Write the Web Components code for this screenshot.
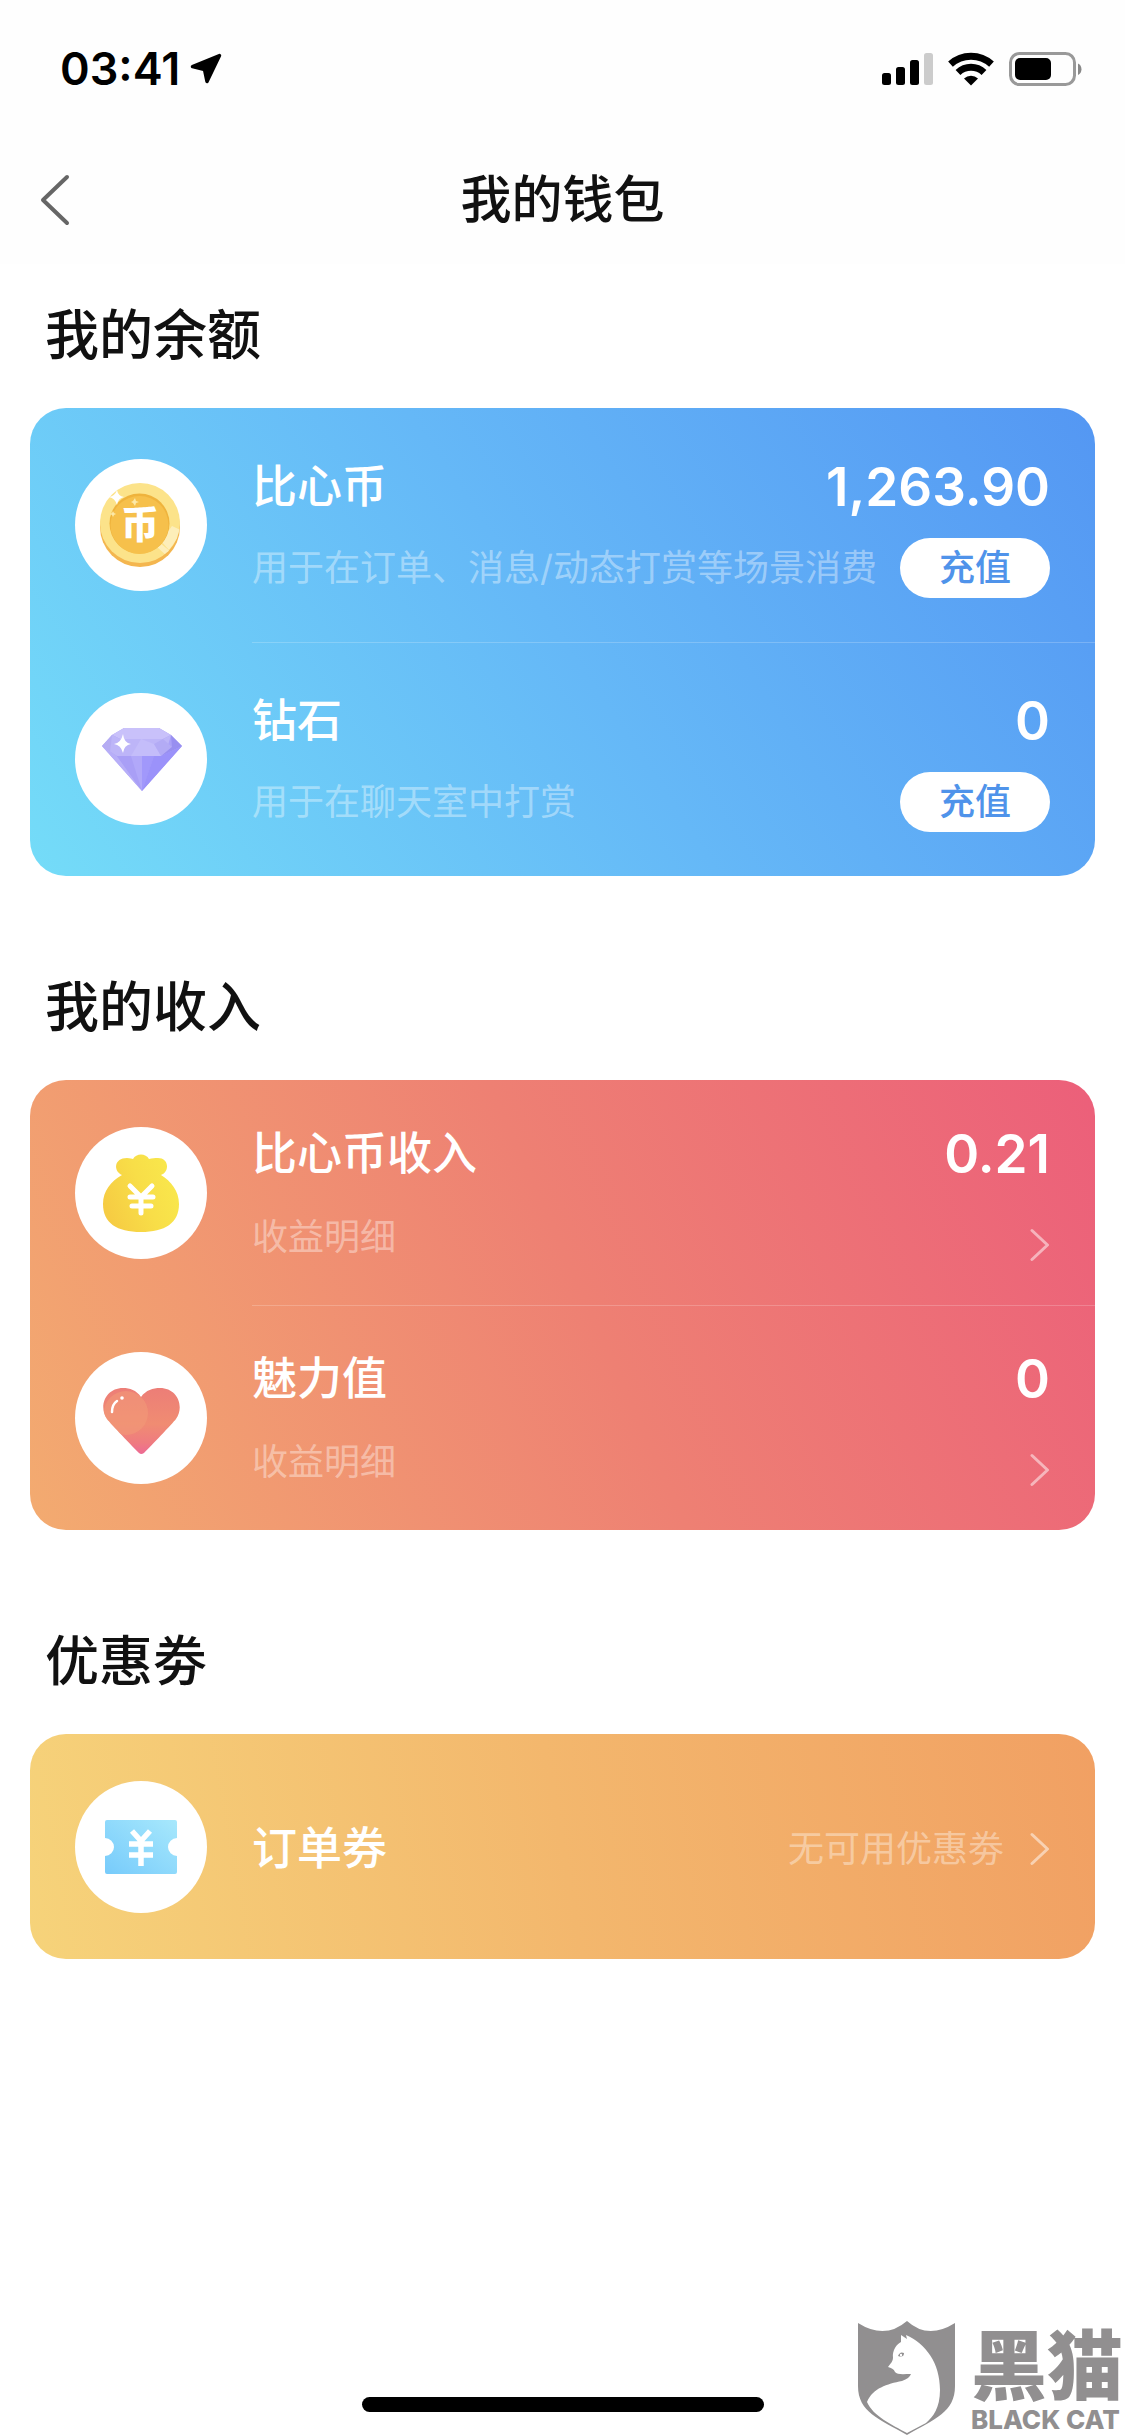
<!DOCTYPE html>
<html lang="zh-CN">
<head>
<meta charset="utf-8">
<meta name="viewport" content="width=device-width, initial-scale=1">
<title>我的钱包</title>
<style>
  body {
    margin: 0;
    background: #fff;
    color: #111;
    font-family: Inter, "Noto Sans CJK SC", sans-serif;
  }
</style>
</head>
<body>
<wallet-app></wallet-app>

<script>
const define = (name, html) => {
  const template = document.createElement('template');
  template.innerHTML = html;
  customElements.define(name, class extends HTMLElement {
    constructor() {
      super();
      this.attachShadow({ mode: 'open' }).append(template.content.cloneNode(true));
    }
    connectedCallback() {
      this.shadowRoot.querySelectorAll('[data-text]').forEach(node => {
        node.textContent = this.getAttribute(node.dataset.text) || '';
      });
    }
  });
};

/* ---------- status bar ---------- */
define('status-bar', `
<style>
  :host { display: flex; align-items: center; justify-content: space-between; height: 132px; padding: 6px 42px 0 60px; box-sizing: border-box; color: #000; }
  .left { display: flex; align-items: center; gap: 10px; }
  time { font-size: 45px; font-weight: 600; line-height: 54px; }
  svg { display: block; }
</style>
<div class="left">
  <time>03:41</time>
  <svg width="32" height="32" viewBox="0 0 32 32" aria-hidden="true"><path d="M29.5 2.5 L2.5 13.5 L14.500 16.500 L17 28.500 Z" fill="#000" stroke="#000" stroke-width="3.500" stroke-linejoin="round"/></svg>
</div>
<svg width="201" height="34" viewBox="0 0 201 34" aria-hidden="true">
  <rect x="0" y="21" width="9" height="12" rx="2.5"/>
  <rect x="14" y="15" width="9" height="18" rx="2.5"/>
  <rect x="28" y="8" width="9" height="25" rx="2.5"/>
  <rect x="42" y="1" width="9" height="32" rx="2.5" fill="#ccc"/>
  <g fill="none" stroke="#000" stroke-width="7">
    <path d="M68.5 12.2 A30.5 30.5 0 0 1 109.500 12.2"/>
    <path d="M76 20.5 A19 19 0 0 1 102 20.5"/>
  </g>
  <path d="M82 26.500 A10.500 10.500 0 0 1 96 26.500 L89 33.500 Z"/>
  <rect x="128.500" y="1.500" width="64" height="31" rx="9" fill="none" stroke="#999" stroke-width="3"/>
  <rect x="133" y="6" width="36" height="22" rx="5"/>
  <path d="M196 11.500 A6.500 6.500 0 0 1 196 23 Z" fill="#888"/>
</svg>`);

/* ---------- navigation bar ---------- */
define('nav-bar', `
<style>
  :host { display: grid; grid-template-columns: 1fr auto 1fr; align-items: center; height: 132px; padding-top: 4px; box-sizing: border-box; }
  button { justify-self: start; border: 0; background: none; padding: 0 40px; cursor: pointer; }
  svg { display: block; }
  h1 { margin: 0; font-size: 51px; font-weight: 500; line-height: 72px; }
</style>
<button type="button" aria-label="返回">
  <svg width="30" height="52" viewBox="0 0 30 52"><path d="M27 3 L3 26 L27 49" fill="none" stroke="#666" stroke-width="4" stroke-linecap="round" stroke-linejoin="round"/></svg>
</button>
<h1><slot></slot></h1>`);

/* ---------- section: heading and coloured card ---------- */
define('wallet-section', `
<style>
  :host { display: block; padding: 0 30px; }
  h2 { display: flex; align-items: center; height: 144px; margin: 0; padding: 0 15px; font-size: 54px; font-weight: 500; line-height: 72px; }
  .card { border-radius: 36px; background: var(--card-fill); color: #fff; overflow: hidden; }
</style>
<h2 data-text="heading"></h2>
<div class="card"><slot></slot></div>`);

/* ---------- one row of a card ---------- */
define('wallet-row', `
<style>
  :host { display: flex; align-items: stretch; gap: 45px; height: 225px; padding-left: 45px; --gap: 23px; }
  :host([tall]) { height: 234px; --gap: 21px; }
  .icon { align-self: center; flex: none; width: 132px; height: 132px; border-radius: 50%; background: #fff; }
  .body { flex: 1; display: flex; flex-direction: column; justify-content: center; gap: var(--gap); padding: 4px 45px 0 0; border-top: 1px solid transparent; min-width: 0; }
  :host([divided]) .body { border-top-color: rgba(255,255,255,.2); }
  .line { display: flex; align-items: center; justify-content: space-between; height: 60px; white-space: nowrap; }
  h3 { margin: 0; font-size: 45px; font-weight: 500; line-height: 60px; }
  .amount { font-size: 53px; font-weight: 600; line-height: 60px; }
  .note { font-size: 36px; line-height: 60px; font-weight: 400; color: rgba(255,255,255,.4); }
  :host([single]) .sub { display: none; }
</style>
<div class="icon"><slot name="icon"></slot></div>
<div class="body">
  <div class="line"><h3 data-text="name"></h3><span class="amount" data-text="amount"></span><slot name="side"></slot></div>
  <div class="line sub"><span class="note" data-text="note"></span><slot></slot></div>
</div>`);

define('recharge-button', `
<style>
  :host { display: block; }
  button { display: block; width: 150px; height: 60px; border: 0; border-radius: 30px; padding: 0; background: #fff; color: #4f93ea; font: 500 36px/60px Inter, "Noto Sans CJK SC", sans-serif; cursor: pointer; }
</style>
<button type="button"><slot></slot></button>`);

define('more-link', `
<style>
  :host { display: block; align-self: flex-end; }
  :host([middle]) { align-self: center; }
  a { display: flex; align-items: center; gap: 26px; color: rgba(255,255,255,.4); text-decoration: none; font-size: 36px; font-weight: 400; line-height: 44px; }
  svg { display: block; }
</style>
<a href="#detail" aria-label="查看明细"><slot></slot>
  <svg width="20" height="44" viewBox="0 0 20 44"><path d="M2 7.500 L17.500 22 L2 36.500" fill="none" stroke="#fff" stroke-opacity=".5" stroke-width="3" stroke-linecap="round" stroke-linejoin="round"/></svg>
</a>`);

/* ---------- round icons ---------- */
define('coin-icon', `
<style>:host, svg { display: block; } text { font: 900 38px "Noto Sans CJK SC", sans-serif; }</style>
<svg width="132" height="132" viewBox="0 0 132 132">
  <circle cx="65" cy="68" r="40" fill="#f4b64f"/>
  <circle cx="65" cy="64" r="40" fill="#fce38a"/>
  <clipPath id="c"><circle cx="65" cy="64" r="40"/></clipPath>
  <g clip-path="url(#c)" fill="#fff" opacity=".4"><path d="M86 82 L97 67 L108 72 L94 91 Z"/><path d="M82 88 L85 84 L96 93 L92 97 Z"/></g>
  <circle cx="64.500" cy="64.500" r="30" fill="#efb33c"/>
  <circle cx="64.500" cy="66" r="29" fill="#f6c04b"/>
  <text x="65" y="79" text-anchor="middle" fill="#fff">币</text>
  <path d="M42 31 Q43 37 49 38 Q43 39 42 46 Q40 39 34 38 Q40 37 42 31 Z" fill="#fff"/>
  <path d="M60 39 L61 42 L64 43 L61 44 L60 47 L58 44 L56 43 L58 42 Z M38 52 L39 54 L41 55 L39 56 L38 58 L37 56 L35 55 L37 54 Z" fill="#fce9a8"/>
</svg>`);

define('diamond-icon', `
<style>:host, svg { display: block; }</style>
<svg width="132" height="132" viewBox="0 0 132 132">
  <path d="M49 35 H84 L96 42 L107 53 L67 98 L27 53 L37 42 Z" fill="#aaa1f7"/>
  <path d="M49 35 H84 L96 42 L88 46 H45 L37 42 Z" fill="#c9c1fa"/>
  <path d="M37 42 L45 46 L35 59 L27 53 Z" fill="#b5acf3"/>
  <path d="M37 42 L45 46 H88 L96 42 L91 59 L86 63 H42 L35 59 Z" fill="#bdb5f8"/>
  <path d="M66 46 L79 51 L86 63 H56 Z" fill="#c4bdfa"/>
  <path d="M79 51 L88 46 L97 54 L86 63 Z" fill="#b3abf5"/>
  <path d="M96 42 L107 53 L86 63 L97 54 Z" fill="#988ff0"/>
  <path d="M27 53 L42 63 L67 98 Z" fill="#b7aef8"/>
  <path d="M42 63 H56 L67 98 Z" fill="#a99ff6"/>
  <path d="M56 63 H67 V98 Z" fill="#b1a8f9"/>
  <path d="M67 63 H79 L67 98 Z" fill="#a198fb"/>
  <path d="M79 63 H86 L107 53 L67 98 Z" fill="#9b92fa"/>
  <path d="M48 41 Q49 50 56 51 Q49 52 48 60 Q46 52 39 51 Q46 50 48 41 Z" fill="#fff"/>
</svg>`);

define('bag-icon', `
<style>:host, svg { display: block; }</style>
<svg width="132" height="132" viewBox="0 0 132 132">
  <defs><linearGradient id="g" x1="1" y1="0.200" x2="0" y2="0.600"><stop offset="0" stop-color="#f9e94d"/><stop offset=".5" stop-color="#f8de48"/><stop offset="1" stop-color="#f6cc43"/></linearGradient></defs>
  <path d="M47 48 C38 44 39 31 52 31 C55 31 57 32 58 32 C61 26 71 26 74 32 C77 31 80 31 83 31 C94 31 95 45 86 48 C96 54 104 64 104 77 C104 96 90 105 66 105 C42 105 28 96 28 77 C28 64 36 54 47 48 Z" fill="url(#g)"/>
  <path d="M55 59 L66 70 L77 59 M55 70 H78 M57 79 H76 M66 70 V86" fill="none" stroke="#fff" stroke-width="5" stroke-linecap="round" stroke-linejoin="round"/>
</svg>`);

define('heart-icon', `
<style>:host, svg { display: block; }</style>
<svg width="132" height="132" viewBox="0 0 132 132">
  <defs>
    <linearGradient id="h" x1="0.500" y1="0" x2="0.500" y2="1"><stop offset="0" stop-color="#ec7b78"/><stop offset=".55" stop-color="#f08c72"/><stop offset=".8" stop-color="#ef7b80"/><stop offset="1" stop-color="#ec649c"/></linearGradient>
    <clipPath id="k"><path d="M66 45 C71 38 78 36 85 36 C102 36 110 54 101 67 C97 72 76 94 69 101 Q66 103 64 101 C57 94 36 72 32 67 C23 54 31 36 48 36 C55 36 61 38 66 45 Z"/></clipPath>
  </defs>
  <g clip-path="url(#k)">
    <rect x="20" y="30" width="94" height="76" fill="url(#h)"/>
    <circle cx="51" cy="61" r="22" fill="#f39a78" opacity=".55"/>
  </g>
  <path d="M37 60 C37 54 39 51 42 49" fill="none" stroke="#fff" stroke-width="2.500" stroke-linecap="round"/>
  <circle cx="47" cy="46" r="1.800" fill="#fff"/>
</svg>`);

define('ticket-icon', `
<style>:host, svg { display: block; }</style>
<svg width="132" height="132" viewBox="0 0 132 132">
  <defs><linearGradient id="t" x1="1" y1="0" x2="0" y2="1"><stop offset="0" stop-color="#a7e8fc"/><stop offset="1" stop-color="#77cbfb"/></linearGradient></defs>
  <path d="M32 39 H100 Q102 39 102 41 V57 A9 9 0 0 0 102 75 V91 Q102 93 100 93 H32 Q30 93 30 91 V75 A9 9 0 0 0 30 57 V41 Q30 39 32 39 Z" fill="url(#t)"/>
  <path d="M57 50 L66 60 L75 50 M54 63 H78 M54 74 H78 M66 60 V85" fill="none" stroke="#fff" stroke-width="5.500"/>
</svg>`);

/* ---------- publisher mark over the bottom corner ---------- */
define('black-cat-mark', `
<style>
  :host { position: absolute; right: 2px; bottom: 0; display: flex; align-items: flex-end; gap: 15px; color: #918f90; }
  svg { display: block; }
  .words { display: flex; flex-direction: column; gap: 6px; padding-bottom: 3px; }
  .cn { font: 900 76px/80px "Noto Sans CJK SC", sans-serif; }
  .en { font: 800 26px/26px Inter, sans-serif; }
</style>
<svg width="98" height="116" viewBox="0 0 98 116" aria-hidden="true">
  <path d="M0 3 Q27 20 49 1 Q70 20 97 3 V66 C97 92 77 99 49 115 C21 99 0 92 0 66 Z" fill="#918f90"/>
  <path d="M43 15 L49 19 L48 15 C68 24 82 43 82 70 C82 88 75 97 68 103 L49 113 C34 105 15 96 9 82 C15 68 29 64 44 61 C49 59 52 57 53 54 C46 54 39 55 37 52 C36 49 33 48 30 47 C33 43 35 41 35 38 C34 30 39 24 43 22 Z" fill="#fff"/>
  <path d="M40 36 Q42 31 46 33 Q46 38 40 36 Z" fill="#918f90"/><circle cx="43" cy="35" r="1.200" fill="#fff"/>
</svg>
<div class="words"><span class="cn">黑猫</span><span class="en">BLACK CAT</span></div>`);

/* ---------- page ---------- */
define('wallet-app', `
<style>
  :host { position: relative; display: flex; flex-direction: column; min-height: 100vh; }
  header { background: #fefefe; }
  main { flex: 1; display: flex; flex-direction: column; gap: 60px; }
  .blue { --card-fill: linear-gradient(56deg, #74dcf8 0%, #65b8f7 50%, #5497f3 100%); }
  .red { --card-fill: linear-gradient(66deg, #f3ab70 0%, #ee8073 52%, #ec5f7a 100%); }
  .gold { --card-fill: linear-gradient(80deg, #f6d37a 0%, #f3b76d 50%, #f1a063 100%); }
  footer { display: flex; justify-content: center; padding: 24px 0; }
  .home { width: 402px; height: 15px; border-radius: 8px; background: #000; }
</style>
<header>
  <status-bar></status-bar>
  <nav-bar>我的钱包</nav-bar>
</header>
<main>
  <wallet-section class="blue" heading="我的余额">
    <wallet-row tall name="比心币" amount="1,263.90" note="用于在订单、消息/动态打赏等场景消费">
      <coin-icon slot="icon"></coin-icon>
      <recharge-button>充值</recharge-button>
    </wallet-row>
    <wallet-row tall divided name="钻石" amount="0" note="用于在聊天室中打赏">
      <diamond-icon slot="icon"></diamond-icon>
      <recharge-button>充值</recharge-button>
    </wallet-row>
  </wallet-section>
  <wallet-section class="red" heading="我的收入">
    <wallet-row name="比心币收入" amount="0.21" note="收益明细">
      <bag-icon slot="icon"></bag-icon>
      <more-link></more-link>
    </wallet-row>
    <wallet-row divided name="魅力值" amount="0" note="收益明细">
      <heart-icon slot="icon"></heart-icon>
      <more-link></more-link>
    </wallet-row>
  </wallet-section>
  <wallet-section class="gold" heading="优惠劵">
    <wallet-row single name="订单券">
      <ticket-icon slot="icon"></ticket-icon>
      <more-link slot="side" middle>无可用优惠劵</more-link>
    </wallet-row>
  </wallet-section>
</main>
<footer><div class="home"></div></footer>
<black-cat-mark></black-cat-mark>`);
</script>
</body>
</html>
